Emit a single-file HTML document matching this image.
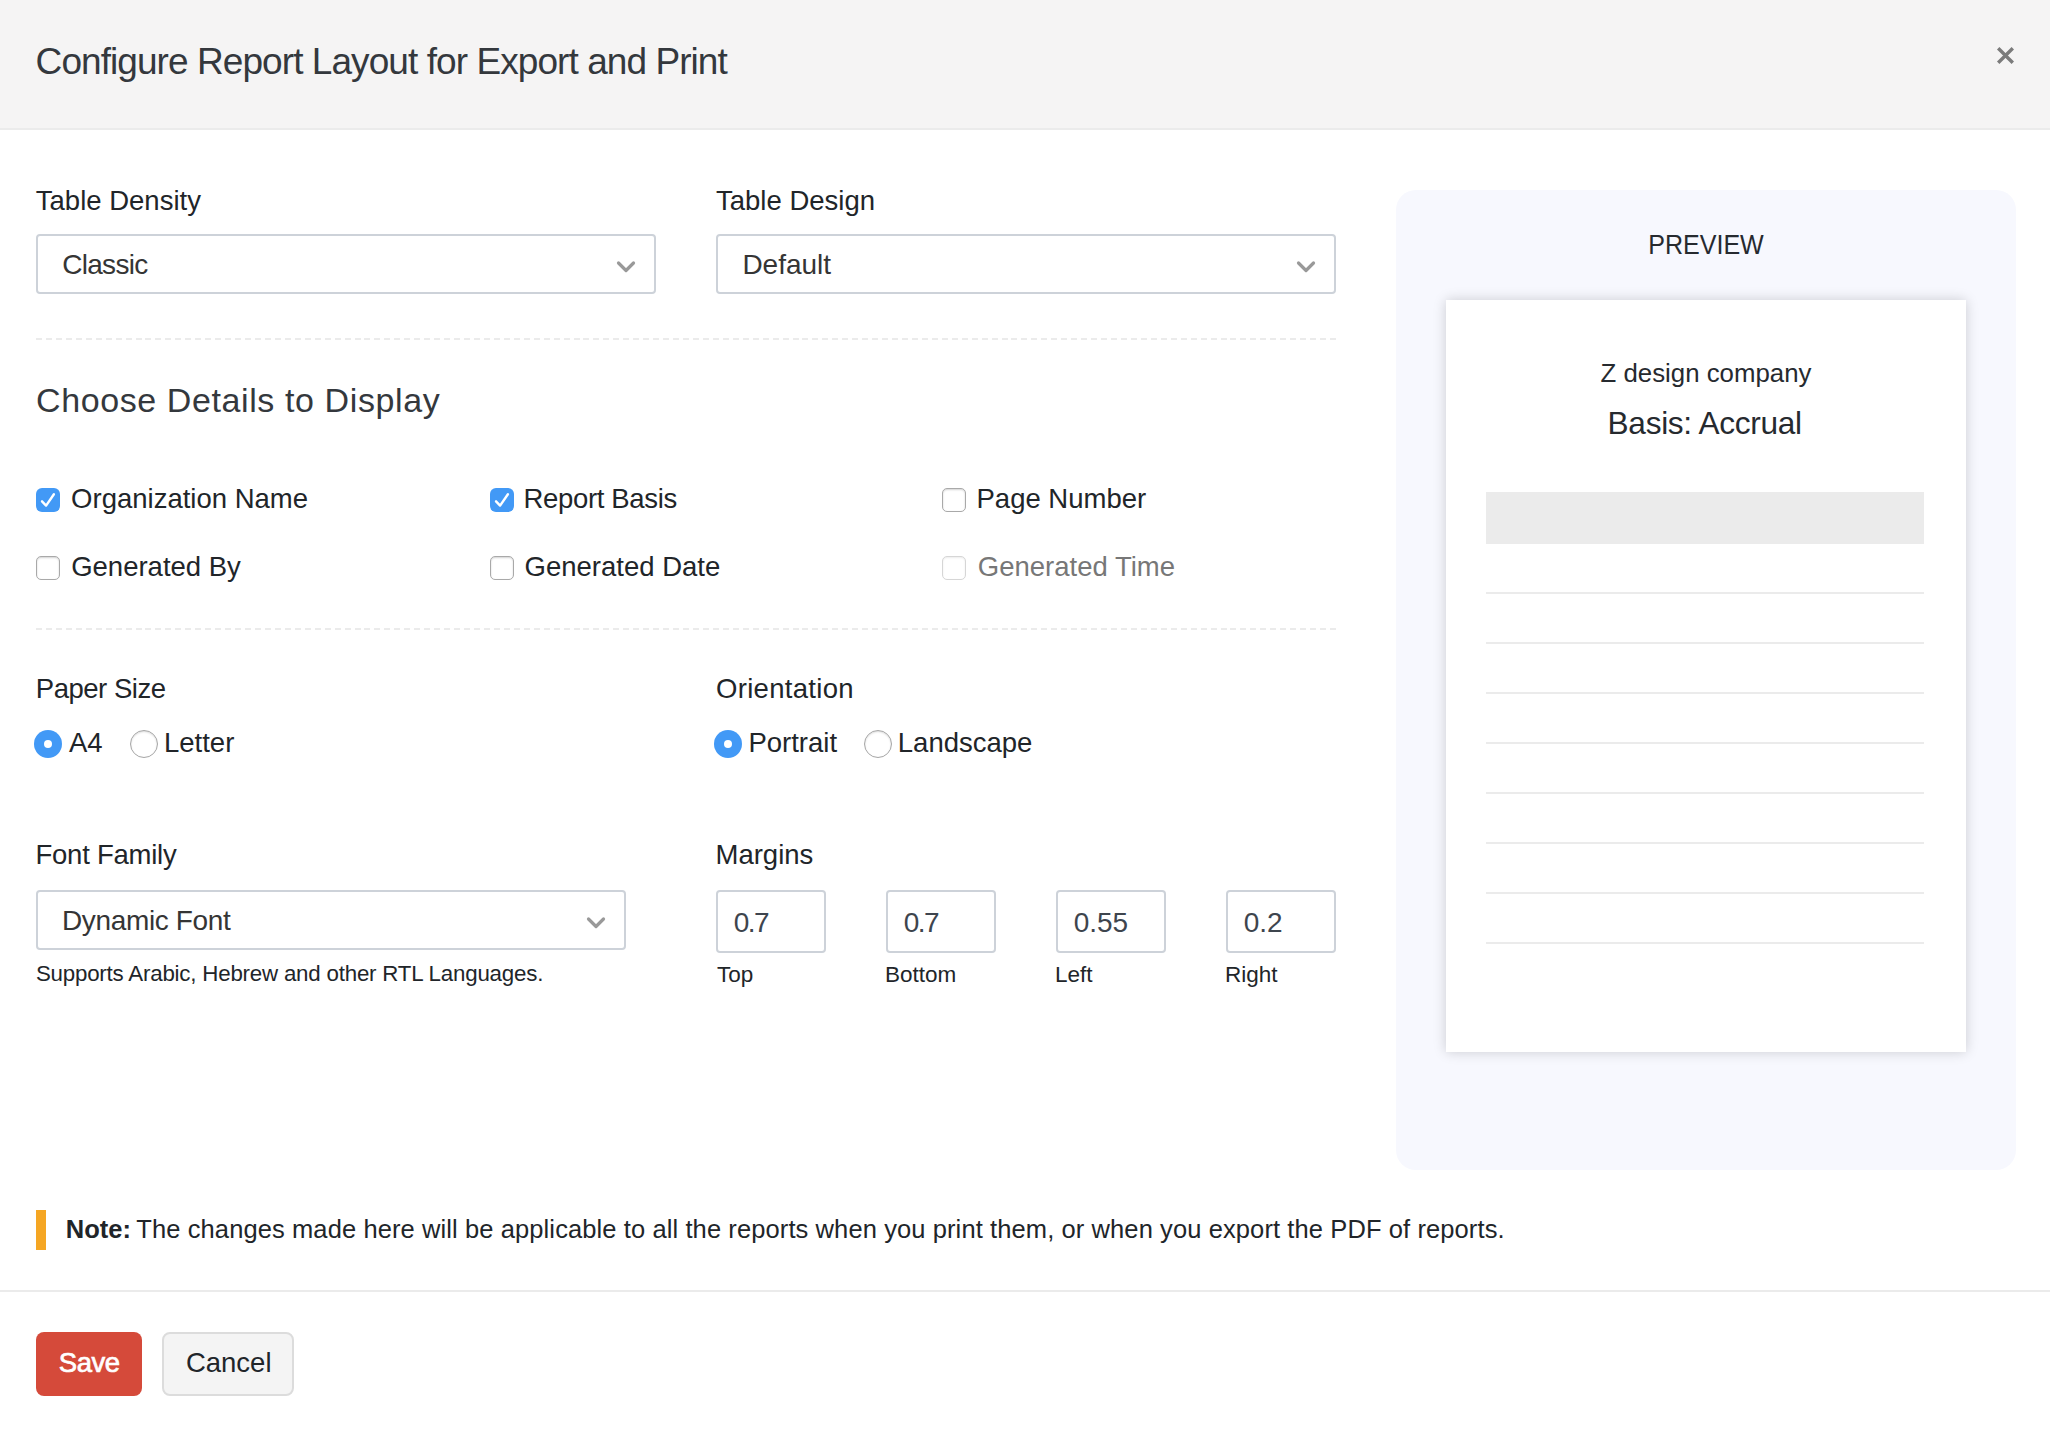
<!DOCTYPE html>
<html><head><meta charset="utf-8"><title>Configure Report Layout</title>
<style>
html,body{margin:0;padding:0;background:#fff;}
body{width:2050px;height:1430px;position:relative;overflow:hidden;font-family:"Liberation Sans", sans-serif;}
.t{position:absolute;white-space:nowrap;font-family:"Liberation Sans", sans-serif;}
.b{position:absolute;}
</style></head><body>
<div class="b" style="left:0px;top:0px;width:2050px;height:128px;background:#f5f4f4;"></div>
<div class="b" style="left:0px;top:128px;width:2050px;height:2px;background:#ebebeb;"></div>
<div class="t" style="left:35.60px;top:42.88px;font-size:37px;line-height:37px;color:#34383d;letter-spacing:-0.93px;">Configure Report Layout for Export and Print</div>
<svg class="b" style="left:1990px;top:40px" width="30" height="30" viewBox="1990 40 30 30"><path d="M1998.2 48.2L2012.8 62.8M2012.8 48.2L1998.2 62.8" stroke="#7b7b7b" stroke-width="3.4" fill="none"/></svg>
<div class="t" style="left:35.80px;top:186.72px;font-size:27.5px;line-height:27.5px;color:#212529;">Table Density</div>
<div class="t" style="left:716.00px;top:186.72px;font-size:27.5px;line-height:27.5px;color:#212529;">Table Design</div>
<div class="b" style="left:36px;top:234px;width:616px;height:56px;border:2px solid #cdd2d9;border-radius:4px;background:#fff;"></div>
<div class="t" style="left:62.20px;top:250.90px;font-size:28px;line-height:28px;color:#353535;letter-spacing:-0.7px;">Classic</div>
<svg class="b" style="left:614px;top:254.5px" width="24" height="24" viewBox="614 254.5 24 24"><path d="M618.5 262.5L626 270.0L633.5 262.5" stroke="#999" stroke-width="3.2" stroke-linecap="round" stroke-linejoin="round" fill="none"/></svg>
<div class="b" style="left:716px;top:234px;width:616px;height:56px;border:2px solid #cdd2d9;border-radius:4px;background:#fff;"></div>
<div class="t" style="left:742.40px;top:250.90px;font-size:28px;line-height:28px;color:#353535;">Default</div>
<svg class="b" style="left:1294px;top:254.5px" width="24" height="24" viewBox="1294 254.5 24 24"><path d="M1298.5 262.5L1306 270.0L1313.5 262.5" stroke="#999" stroke-width="3.2" stroke-linecap="round" stroke-linejoin="round" fill="none"/></svg>
<div class="b" style="left:36px;top:338px;width:1300px;height:2px;background:repeating-linear-gradient(90deg,#ebebeb 0 6px,transparent 6px 9.954px);"></div>
<div class="t" style="left:36.00px;top:382.92px;font-size:34px;line-height:34px;color:#34383d;letter-spacing:0.6px;">Choose Details to Display</div>
<div class="b" style="left:36px;top:488px;width:24px;height:24px;border-radius:6px;background:#4299f6;"><svg width="24" height="24" viewBox="0 0 24 24" style="position:absolute;left:0;top:0"><path d="M6 13.3L10.1 17.6L17.9 6.3" stroke="#fff" stroke-width="2.4" stroke-linecap="round" stroke-linejoin="round" fill="none"/></svg></div>
<div class="t" style="left:71.10px;top:485.02px;font-size:27.5px;line-height:27.5px;color:#212529;">Organization Name</div>
<div class="b" style="left:490px;top:488px;width:24px;height:24px;border-radius:6px;background:#4299f6;"><svg width="24" height="24" viewBox="0 0 24 24" style="position:absolute;left:0;top:0"><path d="M6 13.3L10.1 17.6L17.9 6.3" stroke="#fff" stroke-width="2.4" stroke-linecap="round" stroke-linejoin="round" fill="none"/></svg></div>
<div class="t" style="left:523.60px;top:485.02px;font-size:27.5px;line-height:27.5px;color:#212529;letter-spacing:-0.35px;">Report Basis</div>
<div class="b" style="left:942px;top:488px;width:22px;height:22px;border:1px solid #a9a9a9;border-radius:5px;background:#fff;box-shadow:inset 0 1px 2px rgba(0,0,0,.18);"></div>
<div class="t" style="left:976.50px;top:485.02px;font-size:27.5px;line-height:27.5px;color:#212529;">Page Number</div>
<div class="b" style="left:36px;top:556px;width:22px;height:22px;border:1px solid #a9a9a9;border-radius:5px;background:#fff;box-shadow:inset 0 1px 2px rgba(0,0,0,.18);"></div>
<div class="t" style="left:71.20px;top:553.02px;font-size:27.5px;line-height:27.5px;color:#212529;">Generated By</div>
<div class="b" style="left:490px;top:556px;width:22px;height:22px;border:1px solid #a9a9a9;border-radius:5px;background:#fff;box-shadow:inset 0 1px 2px rgba(0,0,0,.18);"></div>
<div class="t" style="left:524.60px;top:553.02px;font-size:27.5px;line-height:27.5px;color:#212529;">Generated Date</div>
<div class="b" style="left:942px;top:556px;width:22px;height:22px;border:1px solid #d6d6d6;border-radius:5px;background:#fff;box-shadow:inset 0 1px 2px rgba(0,0,0,.08);"></div>
<div class="t" style="left:977.80px;top:553.02px;font-size:27.5px;line-height:27.5px;color:#777;">Generated Time</div>
<div class="b" style="left:36px;top:628px;width:1300px;height:2px;background:repeating-linear-gradient(90deg,#ebebeb 0 6px,transparent 6px 9.954px);"></div>
<div class="t" style="left:35.80px;top:674.62px;font-size:27.5px;line-height:27.5px;color:#212529;letter-spacing:-0.48px;">Paper Size</div>
<div class="t" style="left:716.00px;top:674.62px;font-size:27.5px;line-height:27.5px;color:#212529;letter-spacing:0.3px;">Orientation</div>
<div class="b" style="left:34px;top:730px;width:28px;height:28px;border-radius:50%;background:#4299f6;"><div style="position:absolute;left:10px;top:10px;width:8px;height:8px;border-radius:50%;background:#fff;"></div></div>
<div class="t" style="left:68.90px;top:728.52px;font-size:27.5px;line-height:27.5px;color:#212529;">A4</div>
<div class="b" style="left:130px;top:730px;width:26px;height:26px;border:1px solid #a6a6a6;border-radius:50%;background:#fff;box-shadow:inset 0 1px 2px rgba(0,0,0,.15);"></div>
<div class="t" style="left:164.00px;top:728.52px;font-size:27.5px;line-height:27.5px;color:#212529;">Letter</div>
<div class="b" style="left:714px;top:730px;width:28px;height:28px;border-radius:50%;background:#4299f6;"><div style="position:absolute;left:10px;top:10px;width:8px;height:8px;border-radius:50%;background:#fff;"></div></div>
<div class="t" style="left:748.40px;top:728.52px;font-size:27.5px;line-height:27.5px;color:#212529;">Portrait</div>
<div class="b" style="left:864px;top:730px;width:26px;height:26px;border:1px solid #a6a6a6;border-radius:50%;background:#fff;box-shadow:inset 0 1px 2px rgba(0,0,0,.15);"></div>
<div class="t" style="left:897.80px;top:728.52px;font-size:27.5px;line-height:27.5px;color:#212529;">Landscape</div>
<div class="t" style="left:35.50px;top:840.62px;font-size:27.5px;line-height:27.5px;color:#212529;letter-spacing:-0.24px;">Font Family</div>
<div class="t" style="left:715.50px;top:840.62px;font-size:27.5px;line-height:27.5px;color:#212529;">Margins</div>
<div class="b" style="left:36px;top:890px;width:586px;height:56px;border:2px solid #cdd2d9;border-radius:4px;background:#fff;"></div>
<div class="t" style="left:62.00px;top:907.20px;font-size:28px;line-height:28px;color:#353535;letter-spacing:-0.36px;">Dynamic Font</div>
<svg class="b" style="left:584px;top:910.5px" width="24" height="24" viewBox="584 910.5 24 24"><path d="M588.5 918.5L596 926.0L603.5 918.5" stroke="#999" stroke-width="3.2" stroke-linecap="round" stroke-linejoin="round" fill="none"/></svg>
<div class="t" style="left:35.90px;top:963.22px;font-size:22.3px;line-height:22.3px;color:#212529;letter-spacing:-0.2px;">Supports Arabic, Hebrew and other RTL Languages.</div>
<div class="b" style="left:716px;top:890px;width:106px;height:59px;border:2px solid #cdd2d9;border-radius:4px;background:#fff;"></div>
<div class="t" style="left:733.70px;top:908.80px;font-size:28px;line-height:28px;color:#3e454e;letter-spacing:-1.5px;">0.7</div>
<div class="t" style="left:716.90px;top:963.55px;font-size:22.5px;line-height:22.5px;color:#212529;">Top</div>
<div class="b" style="left:886px;top:890px;width:106px;height:59px;border:2px solid #cdd2d9;border-radius:4px;background:#fff;"></div>
<div class="t" style="left:903.70px;top:908.80px;font-size:28px;line-height:28px;color:#3e454e;letter-spacing:-1.5px;">0.7</div>
<div class="t" style="left:884.90px;top:963.55px;font-size:22.5px;line-height:22.5px;color:#212529;">Bottom</div>
<div class="b" style="left:1056px;top:890px;width:106px;height:59px;border:2px solid #cdd2d9;border-radius:4px;background:#fff;"></div>
<div class="t" style="left:1073.70px;top:908.80px;font-size:28px;line-height:28px;color:#3e454e;">0.55</div>
<div class="t" style="left:1054.90px;top:963.55px;font-size:22.5px;line-height:22.5px;color:#212529;">Left</div>
<div class="b" style="left:1226px;top:890px;width:106px;height:59px;border:2px solid #cdd2d9;border-radius:4px;background:#fff;"></div>
<div class="t" style="left:1243.70px;top:908.80px;font-size:28px;line-height:28px;color:#3e454e;">0.2</div>
<div class="t" style="left:1224.90px;top:963.55px;font-size:22.5px;line-height:22.5px;color:#212529;">Right</div>
<div class="b" style="left:1396px;top:190px;width:620px;height:980px;background:#f7f8fe;border-radius:20px;"></div>
<div class="t" style="left:1647.50px;top:231.08px;font-size:27.2px;line-height:27.2px;color:#262a2f;transform:scaleX(0.922);transform-origin:2px 0;">PREVIEW</div>
<div class="b" style="left:1446px;top:300px;width:520px;height:752px;background:#fff;box-shadow:0 0 12px rgba(0,0,0,.18);"></div>
<div class="t" style="left:1600.60px;top:361.16px;font-size:25.8px;line-height:25.8px;color:#262a2f;">Z design company</div>
<div class="t" style="left:1607.60px;top:408.25px;font-size:31.6px;line-height:31.6px;color:#262a2f;letter-spacing:-0.3px;">Basis: Accrual</div>
<div class="b" style="left:1486px;top:492px;width:438px;height:52px;background:#ebebeb;"></div>
<div class="b" style="left:1486px;top:592px;width:438px;height:2px;background:#ebebeb;"></div>
<div class="b" style="left:1486px;top:642px;width:438px;height:2px;background:#ebebeb;"></div>
<div class="b" style="left:1486px;top:692px;width:438px;height:2px;background:#ebebeb;"></div>
<div class="b" style="left:1486px;top:742px;width:438px;height:2px;background:#ebebeb;"></div>
<div class="b" style="left:1486px;top:792px;width:438px;height:2px;background:#ebebeb;"></div>
<div class="b" style="left:1486px;top:842px;width:438px;height:2px;background:#ebebeb;"></div>
<div class="b" style="left:1486px;top:892px;width:438px;height:2px;background:#ebebeb;"></div>
<div class="b" style="left:1486px;top:942px;width:438px;height:2px;background:#ebebeb;"></div>
<div class="b" style="left:36px;top:1210px;width:10px;height:40px;background:#f5a623;"></div>
<div class="t" style="left:65.80px;top:1216.81px;font-size:25.5px;line-height:25.5px;color:#212529;font-weight:bold;">Note:</div>
<div class="t" style="left:136.30px;top:1216.81px;font-size:25.5px;line-height:25.5px;color:#212529;letter-spacing:0.1px;">The changes made here will be applicable to all the reports when you print them, or when you export the PDF of reports.</div>
<div class="b" style="left:0px;top:1290px;width:2050px;height:2px;background:#ebebeb;"></div>
<div class="b" style="left:36px;top:1332px;width:106px;height:64px;background:#d54a3a;border-radius:8px;"></div>
<div class="t" style="left:58.80px;top:1348.72px;font-size:27.5px;line-height:27.5px;color:#fff;letter-spacing:-0.5px;-webkit-text-stroke:0.7px #fff;">Save</div>
<div class="b" style="left:162px;top:1332px;width:127.5px;height:59.5px;background:#f4f4f4;border:2px solid #dcdcdc;border-radius:8px;"></div>
<div class="t" style="left:185.90px;top:1348.72px;font-size:27.5px;line-height:27.5px;color:#212529;">Cancel</div>
</body></html>
